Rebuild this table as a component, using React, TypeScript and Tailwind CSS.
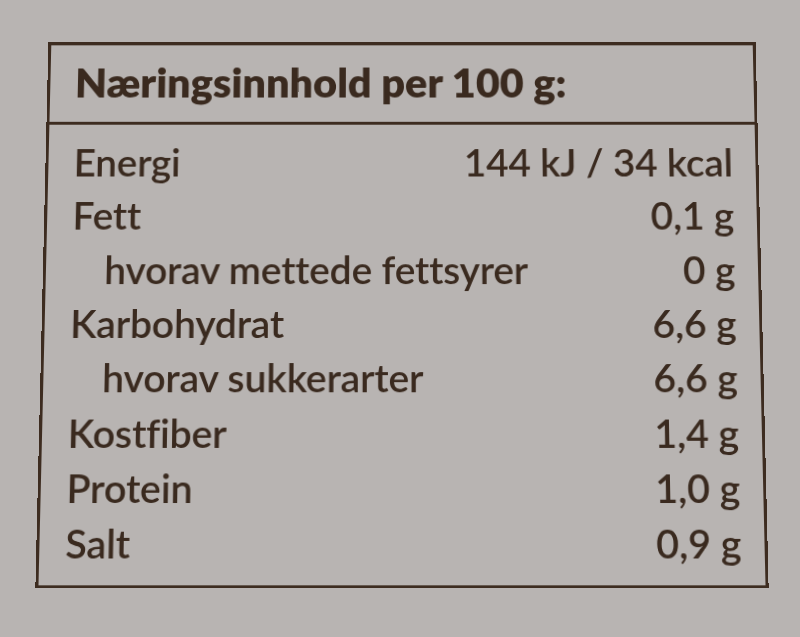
import React from 'react';

const rows = [
  { label: 'Energi', value: '144 kJ / 34 kcal' },
  { label: 'Fett', value: '0,1 g' },
  { label: 'hvorav mettede fettsyrer', value: '0 g', sub: true },
  { label: 'Karbohydrat', value: '6,6 g' },
  { label: 'hvorav sukkerarter', value: '6,6 g', sub: true },
  { label: 'Kostfiber', value: '1,4 g' },
  { label: 'Protein', value: '1,0 g' },
  { label: 'Salt', value: '0,9 g' },
];

const App: React.FC = () => {
  return (
    <div className="w-[800px] h-[637px] bg-[#b8b4b2] pt-[37px] pl-[41.5px] font-['Lato',sans-serif] text-[#3a2a1f] overflow-hidden [font-variant-ligatures:none]">
      {/* label photographed at a slight angle */}
      <div className="w-[720px] h-[547px] border-[3px] border-[#3d2c20] [transform:perspective(1000px)_rotateX(3.8deg)]">
        <div className="h-[82px] border-b-[3px] border-[#3d2c20] pl-[25px] pt-[13px]">
          <h1 className="text-[42px] leading-[50px] font-extrabold">Næringsinnhold per 100 g:</h1>
        </div>
        <div className="pt-[11px] pl-[25.5px] pr-[23px]">
          {rows.map((row) => (
            <div key={row.label} className="flex items-center justify-between h-[54.33px] text-[39px] leading-[54.33px] font-semibold tracking-[-0.15px]">
              <span className={row.sub ? 'pl-[33px]' : ''}>{row.label}</span>
              <span>{row.value}</span>
            </div>
          ))}
        </div>
      </div>
    </div>
  );
};

export default App;
